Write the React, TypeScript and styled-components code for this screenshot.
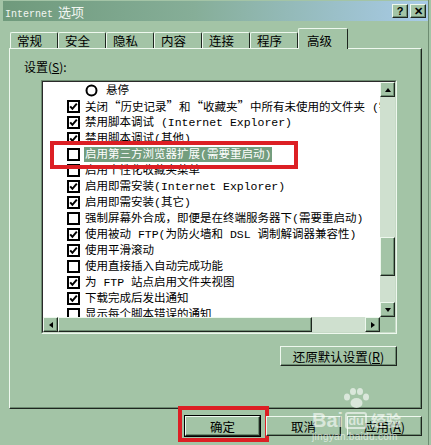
import styled, { createGlobalStyle, css } from "styled-components";

const WIN = "#a3c4a6";
const LIGHT = "#eef8ee";
const SHADE = "#6d8c71";
const DARK = "#1e261f";
const RED = "#dc1f24";
const FONT = `"Liberation Mono", "Noto Sans CJK SC", monospace`;
const CJK = `"Noto Sans CJK SC", "Liberation Sans", sans-serif`;

const GlobalStyle = createGlobalStyle`
    html, body {
        margin: 0;
        padding: 0;
        background: ${WIN};
    }
    body {
        width: 431px;
        height: 445px;
        overflow: hidden;
    }
`;

const Window = styled.div`
    position: relative;
    width: 431px;
    height: 445px;
    box-sizing: border-box;
    padding: 1px 3px 0 3px;
    background: ${WIN};
    box-shadow: inset -2px 0 0 ${WIN}, inset -3px 0 0 ${SHADE};
    font-family: ${FONT};
    font-size: 11.5px;
    color: #000;
    overflow: hidden;
`;

const TitleBar = styled.div`
    display: flex;
    align-items: center;
    height: 20px;
    padding: 0 2px 0 2px;
    background: linear-gradient(to right, #6f9a7c 0%, #86ae98 45%, #a8cbe8 100%);
`;

const TitleText = styled.div`
    color: #f2f6f2;
    font-family: ${CJK};
    font-size: 13px;
    display: flex;
    align-items: baseline;
    gap: 5px;
`;

const Latin = styled.span<{ $size?: number }>`
    font-family: "Liberation Mono", monospace;
    font-size: ${(p) => p.$size ?? 12}px;
`;

const TitleButtons = styled.div`
    display: flex;
    gap: 2px;
    margin-left: auto;
`;

const raised = css`
    background: ${WIN};
    border: 1px solid;
    border-color: ${LIGHT} ${DARK} ${DARK} ${LIGHT};
    box-shadow: inset -1px -1px 0 ${SHADE};
    box-sizing: border-box;
`;

const CapButton = styled.div`
    ${raised};
    width: 16px;
    height: 14px;
    display: flex;
    align-items: center;
    justify-content: center;
    font-family: "Liberation Sans", sans-serif;
    font-weight: 700;
    font-size: 11px;
    line-height: 1;
`;

const Body = styled.div`
    padding: 0 6px;
`;

const TabRow = styled.div`
    display: flex;
    align-items: flex-end;
    height: 20px;
    margin-top: 7px;
    padding-left: 1px;
    position: relative;
    z-index: 1;
`;

const Tab = styled.div<{ $active?: boolean }>`
    box-sizing: border-box;
    width: ${(p) => (p.$active ? 50 : 48)}px;
    height: ${(p) => (p.$active ? 21 : 16)}px;
    margin-bottom: ${(p) => (p.$active ? -1 : 0)}px;
    background: ${WIN};
    border-top: 1px solid ${LIGHT};
    border-left: 1px solid ${LIGHT};
    border-right: 1px solid ${DARK};
    border-radius: 2px 2px 0 0;
    font-family: ${CJK};
    font-size: 12.5px;
    display: flex;
    align-items: ${(p) => (p.$active ? "flex-start" : "center")};
    padding-top: ${(p) => (p.$active ? 2 : 0)}px;
    padding-left: ${(p) => (p.$active ? 8 : 6)}px;
`;

const Panel = styled.div`
    box-sizing: border-box;
    height: 361px;
    border: 1px solid;
    border-color: ${LIGHT} ${DARK} ${DARK} ${LIGHT};
    box-shadow: inset -1px -1px 0 ${SHADE};
    display: flex;
    flex-direction: column;
    padding-top: 11px;
`;

const FieldLabel = styled.div`
    font-family: ${CJK};
    font-size: 12px;
    line-height: 14px;
    margin-left: 14px;
    u {
        text-decoration: underline;
    }
`;

const ListFrame = styled.div`
    box-sizing: border-box;
    width: 356px;
    height: 254px;
    margin: 6px 0 0 31px;
    border: 1px solid;
    border-color: ${SHADE} ${LIGHT} ${LIGHT} ${SHADE};
`;

const ListInner = styled.div`
    height: 100%;
    box-sizing: border-box;
    border: 1px solid;
    border-color: #2a2a2a #c6dac6 #c6dac6 #2a2a2a;
    display: grid;
    grid-template-columns: 1fr 15px;
    grid-template-rows: 1fr 15px;
`;

const ListContent = styled.div`
    position: relative;
    background: #fff;
    overflow: hidden;
`;

const Row = styled.div<{ $indent: number; $marked?: boolean }>`
    position: relative;
    display: flex;
    align-items: center;
    height: 16px;
    padding-left: ${(p) => p.$indent}px;
    white-space: nowrap;
    ${(p) =>
        p.$marked &&
        css`
            &::after {
                content: "";
                position: absolute;
                left: 7px;
                top: -5px;
                width: 248px;
                height: 28px;
                box-sizing: border-box;
                border: 4px solid ${RED};
                z-index: 2;
            }
        `}
`;

const Label = styled.span<{ $selected?: boolean }>`
    line-height: 15px;
    padding: 0 1px;
    ${(p) =>
        p.$selected &&
        css`
            background: #739d7e;
            color: #fff;
        `}
`;

const Wide = styled.span`
    font-family: ${CJK};
    font-size: 12.5px;
`;

const BoxIcon = styled.svg`
    flex: none;
    margin-right: 4px;
`;

const VBar = styled.div`
    display: flex;
    flex-direction: column;
    background: #cfe0cf;
`;

const HBar = styled.div`
    display: flex;
    background: #cfe0cf;
`;

const ScrollBtn = styled.div`
    ${raised};
    width: 15px;
    height: 15px;
    flex: none;
    display: flex;
    align-items: center;
    justify-content: center;
`;

const Thumb = styled.div<{ $len: number; $vertical?: boolean }>`
    ${raised};
    flex: none;
    ${(p) =>
        p.$vertical
            ? css`
                  width: 15px;
                  height: ${p.$len}px;
              `
            : css`
                  height: 15px;
                  width: ${p.$len}px;
              `}
`;

const Gap = styled.div<{ $len?: number }>`
    flex: ${(p) => (p.$len ? `none` : 1)};
    width: ${(p) => (p.$len ? p.$len : 0)}px;
    height: ${(p) => (p.$len ? p.$len : 0)}px;
`;

const Corner = styled.div`
    background: ${WIN};
`;

const Arrow = styled.span<{ $dir: "up" | "down" | "left" | "right" }>`
    width: 0;
    height: 0;
    border: 3px solid transparent;
    ${(p) =>
        p.$dir === "up"
            ? css`
                  border-bottom: 4px solid #000;
                  border-top-width: 0;
              `
            : p.$dir === "down"
            ? css`
                  border-top: 4px solid #000;
                  border-bottom-width: 0;
              `
            : p.$dir === "left"
            ? css`
                  border-right: 4px solid #000;
                  border-left-width: 0;
              `
            : css`
                  border-left: 4px solid #000;
                  border-right-width: 0;
              `}
`;

const RestoreRow = styled.div`
    display: flex;
    justify-content: flex-end;
    margin-top: 12px;
    padding-right: 24px;
`;

const Button = styled.div<{ $w: number; $default?: boolean; $marked?: boolean }>`
    ${raised};
    position: relative;
    width: ${(p) => p.$w}px;
    height: 20px;
    display: flex;
    align-items: center;
    justify-content: center;
    font-family: ${CJK};
    font-size: 12.5px;
    ${(p) =>
        p.$default &&
        css`
            outline: 1px solid #000;
            outline-offset: 0;
        `}
    ${(p) =>
        p.$marked &&
        css`
            &::after {
                content: "";
                position: absolute;
                left: -8px;
                right: -10px;
                top: -11px;
                bottom: -7px;
                border: 4px solid ${RED};
            }
        `}
    u {
        text-decoration: underline;
    }
`;

const ButtonRow = styled.div`
    display: flex;
    justify-content: flex-end;
    gap: 6px;
    margin-top: 7px;
`;

const Watermark = styled.div`
    position: absolute;
    left: 312px;
    top: 388px;
    width: 95px;
    color: rgba(255, 255, 255, 0.6);
    font-family: "Liberation Sans", sans-serif;
    pointer-events: none;
`;

const MarkLine = styled.div`
    display: flex;
    align-items: center;
    gap: 2px;
    font-weight: 700;
    font-size: 20px;
    line-height: 20px;
`;

const MarkSmall = styled.div`
    font-size: 10px;
    letter-spacing: 0.3px;
    margin-top: 1px;
`;

const DuBox = styled.span`
    font-size: 13px;
    border: 2px solid rgba(255, 255, 255, 0.6);
    border-radius: 3px;
    padding: 0 1px;
    line-height: 13px;
`;

const MarkCjk = styled.span`
    font-family: ${CJK};
    font-size: 15px;
    margin-left: 2px;
`;

type Item = { kind: "check" | "radio"; on?: boolean; text: React.ReactNode; selected?: boolean };

const items: Item[] = [
    { kind: "radio", text: "悬停" },
    {
        kind: "check",
        on: true,
        text: (
            <>
                关闭<Wide>“</Wide>历史记录<Wide>”</Wide>和<Wide>“</Wide>收藏夹<Wide>”</Wide>中所有未使用的文件夹 (需要重启动)
            </>
        ),
    },
    { kind: "check", on: true, text: "禁用脚本调试 (Internet Explorer)" },
    { kind: "check", on: true, text: "禁用脚本调试(其他)" },
    { kind: "check", on: false, text: "启用第三方浏览器扩展(需要重启动)", selected: true },
    { kind: "check", on: false, text: "启用个性化收藏夹菜单" },
    { kind: "check", on: true, text: "启用即需安装(Internet Explorer)" },
    { kind: "check", on: true, text: "启用即需安装(其它)" },
    { kind: "check", on: false, text: "强制屏幕外合成，即便是在终端服务器下(需要重启动)" },
    { kind: "check", on: true, text: "使用被动 FTP(为防火墙和 DSL 调制解调器兼容性)" },
    { kind: "check", on: true, text: "使用平滑滚动" },
    { kind: "check", on: false, text: "使用直接插入自动完成功能" },
    { kind: "check", on: true, text: "为 FTP 站点启用文件夹视图" },
    { kind: "check", on: true, text: "下载完成后发出通知" },
    { kind: "check", on: false, text: "显示每个脚本错误的通知" },
];

function CheckIcon({ on }: { on?: boolean }) {
    return (
        <BoxIcon width="13" height="13" viewBox="0 0 13 13">
            <rect x="1" y="1" width="11" height="11" fill="#fff" stroke="#000" strokeWidth="2" />
            {on && <path d="M3.2 6.3 L5.4 8.8 L9.8 3.6" fill="none" stroke="#000" strokeWidth="2" />}
        </BoxIcon>
    );
}

function RadioIcon() {
    return (
        <BoxIcon width="13" height="13" viewBox="0 0 13 13" style={{ marginRight: 7 }}>
            <circle cx="6.5" cy="6.5" r="5" fill="#fff" stroke="#000" strokeWidth="2" />
        </BoxIcon>
    );
}

function Paw() {
    return (
        <svg width="28" height="20" viewBox="0 0 28 20" style={{ marginLeft: 30 }}>
            <g fill="rgba(255,255,255,0.6)">
                <ellipse cx="5" cy="9" rx="3" ry="3.5" />
                <ellipse cx="11" cy="3.5" rx="3" ry="3.5" />
                <ellipse cx="18" cy="3.5" rx="3" ry="3.5" />
                <ellipse cx="24" cy="9" rx="3" ry="3.5" />
                <ellipse cx="14.5" cy="15" rx="6" ry="5" />
            </g>
        </svg>
    );
}

export default function App() {
    const tabs = ["常规", "安全", "隐私", "内容", "连接", "程序"];
    return (
        <>
            <GlobalStyle />
            <Window>
                <TitleBar>
                    <TitleText>
                        <Latin $size={10}>Internet</Latin>
                        <span>选项</span>
                    </TitleText>
                    <TitleButtons>
                        <CapButton>?</CapButton>
                        <CapButton>✕</CapButton>
                    </TitleButtons>
                </TitleBar>
                <Body>
                    <TabRow>
                        {tabs.map((t) => (
                            <Tab key={t}>{t}</Tab>
                        ))}
                        <Tab $active>高级</Tab>
                    </TabRow>
                    <Panel>
                        <FieldLabel>
                            设置(<u>S</u>):
                        </FieldLabel>
                        <ListFrame>
                            <ListInner>
                                <ListContent>
                                    {items.map((it, i) => (
                                        <Row key={i} $indent={it.kind === "radio" ? 42 : 24} $marked={it.selected}>
                                            {it.kind === "radio" ? <RadioIcon /> : <CheckIcon on={it.on} />}
                                            <Label $selected={it.selected}>{it.text}</Label>
                                        </Row>
                                    ))}
                                </ListContent>
                                <VBar>
                                    <ScrollBtn>
                                        <Arrow $dir="up" />
                                    </ScrollBtn>
                                    <Gap $len={140} />
                                    <Thumb $vertical $len={39} />
                                    <Gap />
                                    <ScrollBtn>
                                        <Arrow $dir="down" />
                                    </ScrollBtn>
                                </VBar>
                                <HBar>
                                    <ScrollBtn>
                                        <Arrow $dir="left" />
                                    </ScrollBtn>
                                    <Thumb $len={254} />
                                    <Gap />
                                    <ScrollBtn>
                                        <Arrow $dir="right" />
                                    </ScrollBtn>
                                </HBar>
                                <Corner />
                            </ListInner>
                        </ListFrame>
                        <RestoreRow>
                            <Button $w={117}>
                                还原默认设置(<u>R</u>)
                            </Button>
                        </RestoreRow>
                    </Panel>
                    <ButtonRow>
                        <Button $w={75} $default $marked>
                            确定
                        </Button>
                        <Button $w={75}>取消</Button>
                        <Button $w={75}>
                            应用(<u>A</u>)
                        </Button>
                    </ButtonRow>
                </Body>
                <Watermark>
                    <Paw />
                    <MarkLine>
                        Bai<DuBox>du</DuBox>
                        <MarkCjk>经验</MarkCjk>
                    </MarkLine>
                    <MarkSmall>jingyan.baidu.com</MarkSmall>
                </Watermark>
            </Window>
        </>
    );
}
